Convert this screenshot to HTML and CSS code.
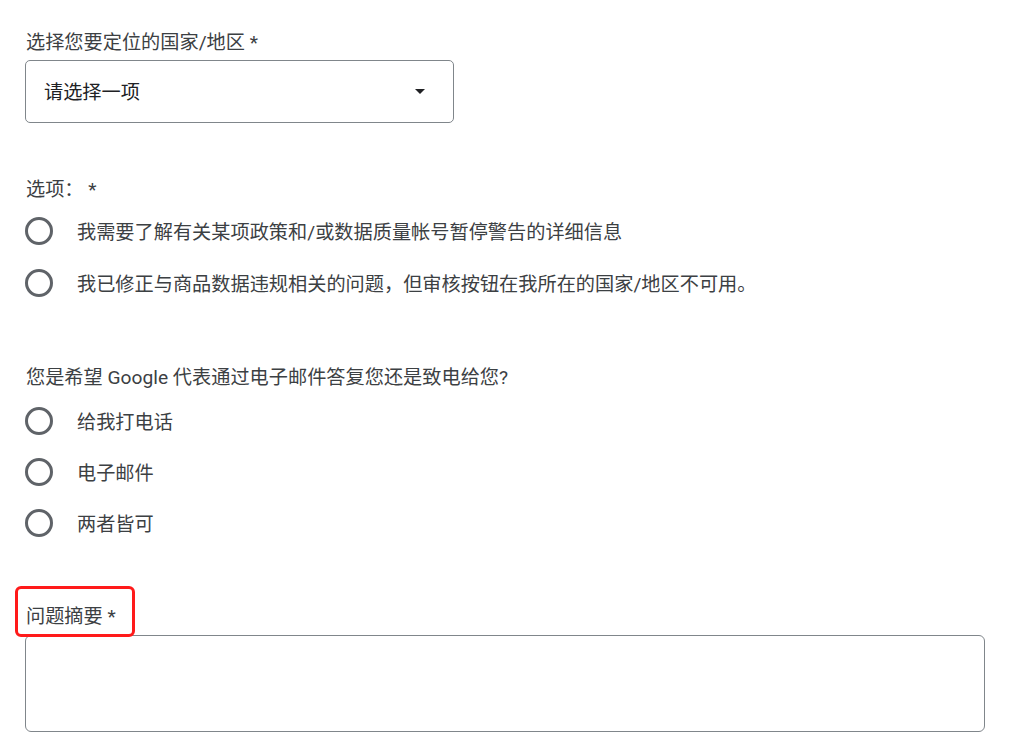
FILE: index.html
```html
<!DOCTYPE html>
<html lang="zh-CN">
<head>
<meta charset="utf-8">
<link rel="stylesheet" href="styles.css">
</head>
<body>
<form class="form">
  <div class="field field-first">
    <label class="label">选择您要定位的国家/地区 *</label>
    <div class="select">
      <span class="select-text">请选择一项</span>
      <span class="arrow"></span>
    </div>
  </div>

  <fieldset class="field field-radio">
    <div class="label">选项： *</div>
    <div class="options">
      <label class="option"><span class="radio"></span><span class="option-text">我需要了解有关某项政策和/或数据质量帐号暂停警告的详细信息</span></label>
      <label class="option"><span class="radio"></span><span class="option-text">我已修正与商品数据违规相关的问题，但审核按钮在我所在的国家/地区不可用。</span></label>
    </div>
  </fieldset>

  <fieldset class="field field-radio">
    <div class="label">您是希望 Google 代表通过电子邮件答复您还是致电给您?</div>
    <div class="options options-tight">
      <label class="option"><span class="radio"></span><span class="option-text">给我打电话</span></label>
      <label class="option"><span class="radio"></span><span class="option-text">电子邮件</span></label>
      <label class="option"><span class="radio"></span><span class="option-text">两者皆可</span></label>
    </div>
  </fieldset>

  <div class="field field-summary">
    <label class="label label-highlight">问题摘要 *</label>
    <div class="textarea"></div>
  </div>
</form>
</body>
</html>
```

FILE: styles.css
```css
html, body {
  margin: 0;
  padding: 0;
  background: #ffffff;
}

body {
  font-family: Roboto, "Noto Sans CJK SC", sans-serif;
  font-size: 19.2px;
  color: #3c4043;
}

.form {
  display: flex;
  flex-direction: column;
  padding: 0 0 0 25px;
}

fieldset {
  border: 0;
  margin: 0;
  padding: 0;
  min-width: 0;
}

.field {
  display: flex;
  flex-direction: column;
}

.label {
  display: block;
  line-height: 24px;
  height: 24px;
  padding: 3px 0 0 1px;
  white-space: nowrap;
}

.field-first {
  padding-top: 28px;
}

.select {
  margin-top: 5px;
  height: 61px;
  border: 1px solid #80868b;
  border-radius: 5px;
  display: flex;
  align-items: center;
  justify-content: space-between;
  padding: 0 28px 0 18px;
  box-sizing: content-box;
  width: 381px;
  color: #202124;
}

.select-text {
  line-height: 24px;
  padding-top: 2px;
}

.arrow {
  width: 0;
  height: 0;
  border-left: 5px solid transparent;
  border-right: 5px solid transparent;
  border-top: 5px solid #202124;
}

.field-radio {
  margin-top: 52px;
}

.field-radio + .field-radio {
  margin-top: 60px;
}

.options {
  display: flex;
  flex-direction: column;
  gap: 12px;
  margin-top: 9px;
}

.options-tight {
  gap: 11px;
  margin-top: 11px;
}

.option {
  display: flex;
  align-items: center;
  height: 40px;
}

.radio {
  width: 22px;
  height: 22px;
  border: 3px solid #5f6368;
  border-radius: 50%;
  flex: none;
}

.option-text {
  margin-left: 24px;
  line-height: 24px;
  padding-top: 4px;
  color: #3c4043;
  white-space: nowrap;
}

.field-summary {
  margin-top: 59px;
}

.label-highlight {
  position: relative;
  align-self: flex-start;
}

.label-highlight::after {
  content: "";
  position: absolute;
  left: -10px;
  top: -16px;
  right: -19px;
  bottom: -8px;
  border: 3px solid #ff1a1a;
  border-radius: 6px;
  pointer-events: none;
}

.textarea {
  margin-top: 6px;
  width: 958px;
  height: 95px;
  border: 1px solid #80868b;
  border-radius: 6px;
}
```
